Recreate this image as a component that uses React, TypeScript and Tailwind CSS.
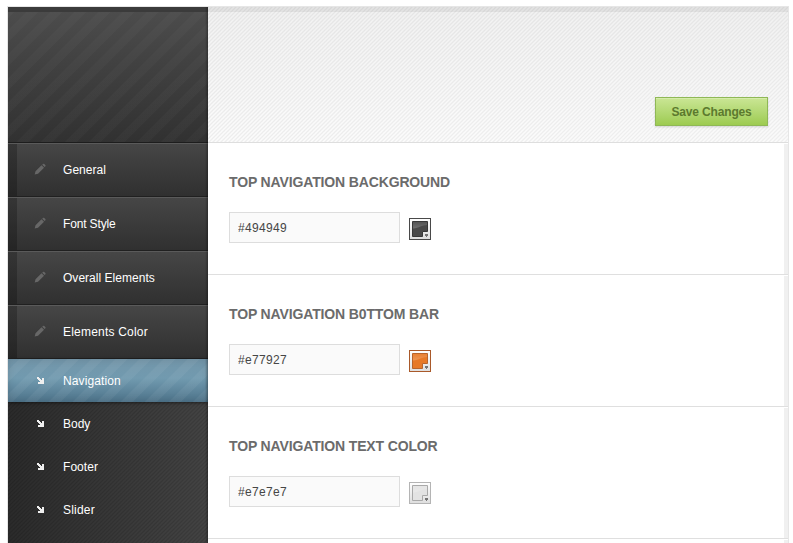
const navItems = [
  { label: 'General', tracking: 'tracking-[0.05px]' },
  { label: 'Font Style', tracking: 'tracking-[-0.15px]' },
  { label: 'Overall Elements', tracking: 'tracking-[0.03px]' },
  { label: 'Elements Color', tracking: 'tracking-[0.2px]' },
];

const subItems = [
  { label: 'Navigation', tracking: 'tracking-[0.1px]' },
  { label: 'Body', tracking: 'tracking-normal' },
  { label: 'Footer', tracking: 'tracking-[0.05px]' },
  { label: 'Slider', tracking: 'tracking-[0.2px]' },
];

const settings = [
  { title: 'TOP NAVIGATION BACKGROUND', value: '#494949', fill: '#494949', frame: '#494949', inner: '#383838' },
  { title: 'TOP NAVIGATION B0TTOM BAR', value: '#e77927', fill: '#e77927', frame: '#a9592a', inner: '#b8642b' },
  { title: 'TOP NAVIGATION TEXT COLOR', value: '#e7e7e7', fill: '#e3e3e3', frame: '#b4b4b4', inner: '#a9a9a9' },
];

function Pencil() {
  return (
    <svg width="12" height="12" viewBox="0 0 12 12" className="-mt-[2px] ml-[26px] mr-px shrink-0" fill="#676767">
      <path d="M.7 11.500L1.500 8.200 7.500 2.300 10 4.800 4 10.700zM8.200 1.700L9.300.7C9.900.2 12.100 2.400 11.600 3L10.600 4.100z" />
    </svg>
  );
}

function Arrow() {
  return (
    <svg width="8" height="8" viewBox="0 0 8 8" className="ml-[29px] shrink-0" fill="#efefef">
      <path d="M0 0H2V1H3V2H4V3H5V1H7V7H1V5H3V4H2V3H1V2H0Z" />
    </svg>
  );
}

function Swatch({ id, fill, frame, inner }: { id: string; fill: string; frame: string; inner: string }) {
  return (
    <svg width="22" height="22" viewBox="0 0 22 22" className="ml-[9px] mt-[6px]">
      <defs>
        <linearGradient id={id} x1="0" y1="0" x2="0" y2="1">
          <stop offset="0" stopColor="#fff" />
          <stop offset="1" stopColor="#dedede" />
        </linearGradient>
        <linearGradient id={id + 'g'} x1="0" y1="0" x2="0" y2="1">
          <stop offset="0" stopColor="#fff" stopOpacity=".06" />
          <stop offset="1" stopColor="#fff" stopOpacity=".22" />
        </linearGradient>
      </defs>
      <rect x=".5" y=".5" width="21" height="21" fill={`url(#${id})`} stroke={frame} />
      <path d="M3.500 3.500H18.500V13.500H13.500V18.500H3.500Z" fill={fill} stroke={inner} />
      <path d="M4 4H18V7C13 7 10 10 4 10.500Z" fill={`url(#${id}g)`} />
      <path d="M16 16H19V18H18V19H17V18H16Z" fill="#747474" />
    </svg>
  );
}

export default function App() {
  return (
    <div className="h-[543px] w-[793px] overflow-hidden bg-white pl-[7px] pt-[6px] font-['Liberation_Sans',Arial,sans-serif]">
      <div className="flex h-[537px] w-[782px] border-x border-t border-[#e6e6e6]">
        <aside className="relative flex w-[200px] shrink-0 flex-col overflow-hidden bg-[#333]">
          <div className="h-[136px] shrink-0 border-b border-[#1d1d1d] bg-[repeating-linear-gradient(135deg,rgba(255,255,255,0.022)_0px,rgba(255,255,255,0.022)_7.500px,transparent_8.500px,transparent_16px,rgba(255,255,255,0.022)_17px),linear-gradient(#4d4d4d,#313131)]">
            <div className="h-[5px] bg-[#3b3b3b]" />
          </div>
          {navItems.map((item) => (
            <div
              key={item.label}
              className="flex h-[54px] shrink-0 border-b border-t border-b-[#202020] border-t-[#5a5a5a] bg-gradient-to-b from-[#464646] to-[#303030]"
            >
              <div className="flex w-full items-center bg-[linear-gradient(90deg,rgba(0,0,0,0.24)_9px,transparent_9px)]">
                <Pencil />
                <span className={`ml-4 pb-px text-[12px] leading-[16px] text-white ${item.tracking}`}>{item.label}</span>
              </div>
            </div>
          ))}
          <div className="flex flex-1 flex-col bg-[repeating-linear-gradient(135deg,rgba(0,0,0,0.13)_0px,transparent_1.414px,rgba(0,0,0,0.13)_2.828px),linear-gradient(90deg,#2b2b2b,#444)]">
            {subItems.map((item, i) => (
              <div
                key={item.label}
                className={`flex h-[43px] shrink-0 items-center ${
                  i === 0
                    ? 'bg-[repeating-linear-gradient(135deg,transparent_0px,transparent_7.500px,rgba(255,255,255,0.05)_8.500px,rgba(255,255,255,0.05)_16px,transparent_17px),linear-gradient(#7396aa,#719aaf_45%,#4d738a)] shadow-[inset_0_0_8px_rgba(0,0,0,0.12),0_1px_3px_rgba(0,0,0,0.5)]'
                    : ''
                }`}
              >
                <Arrow />
                <span className={`ml-[18px] pt-px text-[12px] leading-[16px] text-white ${item.tracking}`}>{item.label}</span>
              </div>
            ))}
          </div>
          <div className="pointer-events-none absolute inset-y-0 right-0 w-[3px] bg-gradient-to-r from-transparent to-black/30" />
        </aside>

        <main className="flex w-[580px] flex-col">
          <header className="flex h-[136px] shrink-0 flex-col border-b border-[#dedede] bg-[repeating-linear-gradient(135deg,rgba(0,0,0,0.055)_0px,transparent_1.414px,rgba(0,0,0,0.055)_2.828px),linear-gradient(#f2f2f2,#fcfcfc)]">
            <div className="h-[5px] bg-black/[0.06]" />
            <button className="mr-5 mt-[85px] h-[29px] w-[113px] self-end border border-[#8fb856] bg-gradient-to-b from-[#cae694] to-[#9dcb50] pt-px text-[12px] font-bold leading-[26px] tracking-[-0.15px] text-[#5c7a2e] shadow-[inset_0_1px_0_#d6ecab,0_1px_2px_rgba(0,0,0,0.15)]">
              Save Changes
            </button>
          </header>
          {settings.map((s) => (
            <section key={s.value} className="flex h-[132px] shrink-0 flex-col border-b border-[#dfdfdf] pt-px">
              <div className="flex-1 border-r-[4px] border-[#f0f0f0] pl-[21px] pt-[28px]">
                <h2 className="h-[20px] whitespace-nowrap text-[14px] font-bold leading-[20px] tracking-[-0.140px] text-[#6b6b6b]">
                  {s.title}
                </h2>
                <div className="mt-[20px] flex">
                  <input
                    defaultValue={s.value}
                    className="h-[31px] w-[171px] border border-[#dddddd] bg-[#fafafa] px-2 text-[12px] tracking-[0.320px] text-[#464646] outline-none"
                  />
                  <Swatch id={'swatch' + s.value.slice(1)} fill={s.fill} frame={s.frame} inner={s.inner} />
                </div>
              </div>
            </section>
          ))}
          <div className="mt-px flex-1 border-r-[4px] border-[#f0f0f0]" />
        </main>
      </div>
    </div>
  );
}
